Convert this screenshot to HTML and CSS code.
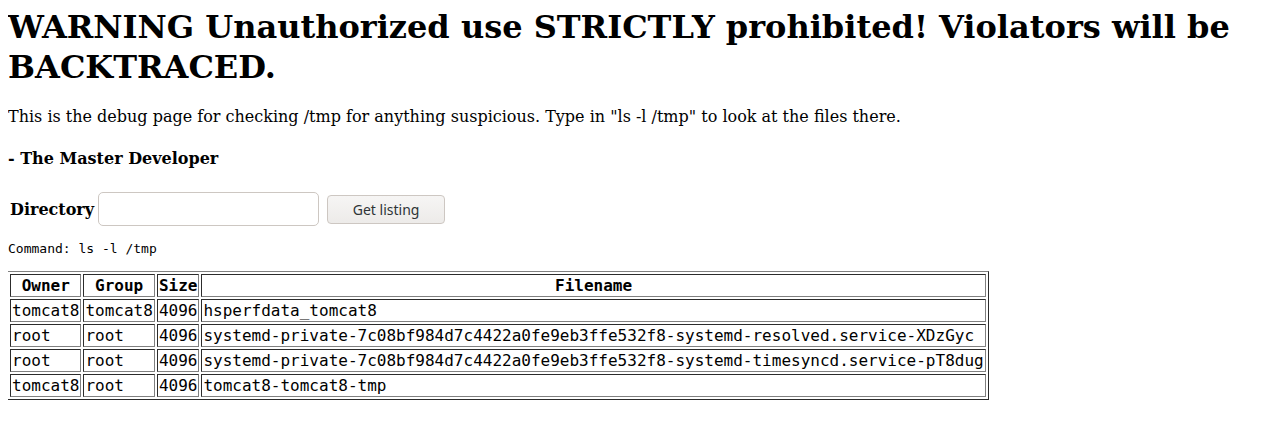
FILE: index.html
```html
<!DOCTYPE html>
<html>
<head>
<meta charset="utf-8">
<title>Debug</title>
<link rel="stylesheet" href="styles.css">
</head>
<body class="page">
<h1 class="title">WARNING Unauthorized use STRICTLY prohibited! Violators will be BACKTRACED.</h1>
<p class="intro">This is the debug page for checking /tmp for anything suspicious. Type in "ls -l /tmp" to look at the files there.</p>
<p class="sig"><b>- The Master Developer</b></p>
<form class="form">
<table class="formtable">
<tr>
<td class="label"><b>Directory</b></td>
<td><input class="dir" type="text" name="dir"></td>
<td><button class="btn" type="button">Get listing</button></td>
</tr>
</table>
</form>
<pre class="cmd">Command: ls -l /tmp</pre>
<table class="listing">
<tr><th>Owner</th><th>Group</th><th>Size</th><th>Filename</th></tr>
<tr><td>tomcat8</td><td>tomcat8</td><td>4096</td><td>hsperfdata_tomcat8</td></tr>
<tr><td>root</td><td>root</td><td>4096</td><td>systemd-private-7c08bf984d7c4422a0fe9eb3ffe532f8-systemd-resolved.service-XDzGyc</td></tr>
<tr><td>root</td><td>root</td><td>4096</td><td>systemd-private-7c08bf984d7c4422a0fe9eb3ffe532f8-systemd-timesyncd.service-pT8dug</td></tr>
<tr><td>tomcat8</td><td>root</td><td>4096</td><td>tomcat8-tomcat8-tmp</td></tr>
</table>
</body>
</html>
```

FILE: styles.css
```css
html, body { background: #fff; }
.page {
  margin: 8px;
  font-family: "DejaVu Serif", serif;
  font-size: 16px;
  color: #000;
}
.title {
  font-size: 32px;
  line-height: 40px;
  font-weight: bold;
  margin: -1px 0 20px 0;
}
.intro { margin: 16px 0; }
.sig { margin: 23px 0 21px 0; }
.form { margin: 0; }
.formtable {
  border-spacing: 2px;
  border-collapse: separate;
  margin-left: -1px;
}
.formtable td { padding: 1px; vertical-align: middle; }
.dir {
  box-sizing: border-box;
  width: 221px;
  height: 34px;
  border: 1px solid #cdc7c2;
  border-radius: 5px;
  background: #fff;
  padding: 0 8px;
  margin: 0;
  font-size: 14px;
  display: block;
}
.btn {
  box-sizing: border-box;
  width: 118px;
  height: 29px;
  margin: 0 0 0 4px;
  border: 1px solid #cdc7c2;
  border-radius: 4px;
  background: linear-gradient(#f6f5f4, #edebe9);
  font-family: "Noto Sans", sans-serif;
  font-size: 14px;
  color: #2e3436;
  display: block;
}
.cmd {
  font-family: "DejaVu Sans Mono", monospace;
  font-size: 13px;
  margin: 12px 0 15px 0;
}
.listing {
  border: 1px outset #808080;
  border-spacing: 2px;
  font-family: "DejaVu Sans Mono", monospace;
  font-size: 16px;
  margin-left: -1px;
}
.listing th, .listing td {
  border: 1px inset #808080;
  padding: 1px;
  text-align: left;
}
.listing th { text-align: center; font-weight: bold; }
```
